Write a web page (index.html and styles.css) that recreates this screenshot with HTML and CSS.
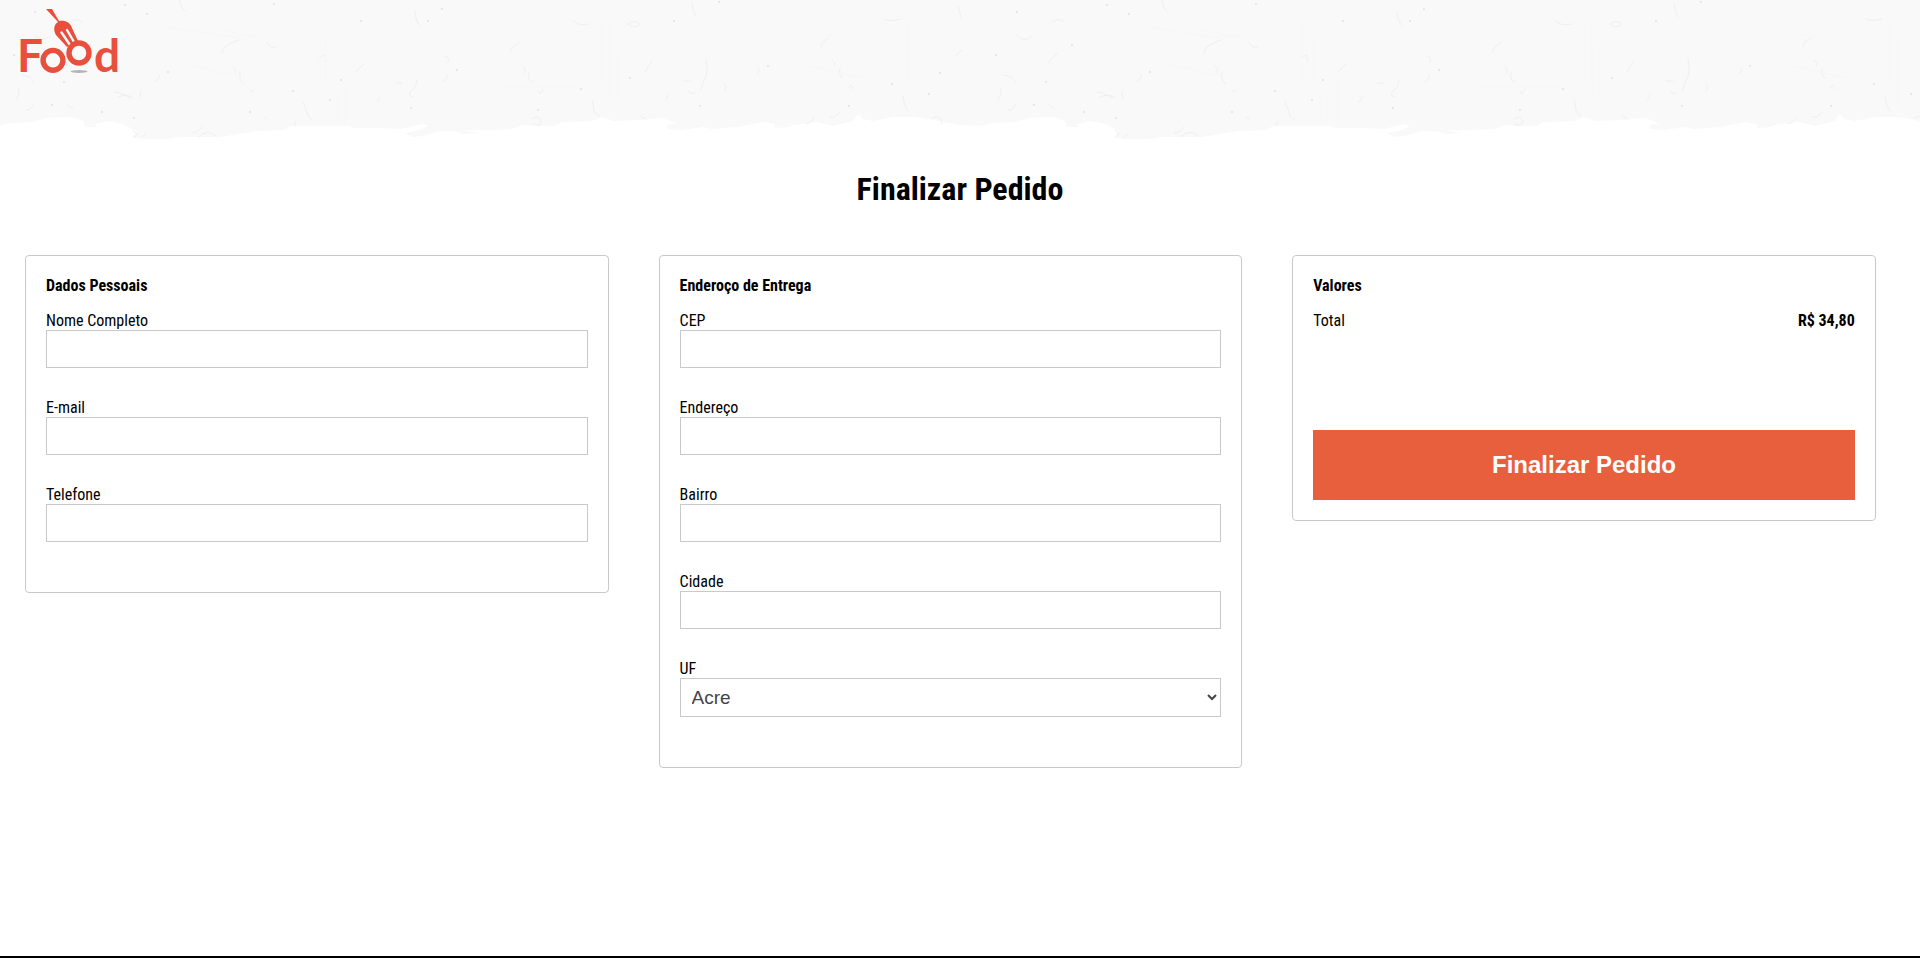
FILE: index.html
```html
<!DOCTYPE html>
<html lang="pt-BR">
<head>
<meta charset="utf-8">
<meta name="viewport" content="width=device-width, initial-scale=1">
<title>Finalizar Pedido</title>
<link rel="stylesheet" href="styles.css">
</head>
<body>
<header class="header">
  <svg class="paper" width="100%" height="140" aria-hidden="true">
    <defs>
      <pattern id="paper" width="982" height="140" patternUnits="userSpaceOnUse">
        <path fill="#f9f9f9" d="M0 0H982V126L960 125L942 122L928 119L913 117H893L873 121L862 119L858 114L853 121L833 126L817 122L792 125L790 127L775 128V124L763 122L738 127L712 129L703 127L682 130L668 129L667 125L678 124L663 118L640 120L613 121L602 117L592 121L562 122L555 126L535 126L523 125L512 129L490 130L465 130L478 133L462 134L455 131L440 131L423 136L412 137L405 133L420 130L428 126L423 124L410 127L402 129L380 128L353 128L348 126H292L283 130L257 131L220 137L180 137L167 139H142L132 137L137 131L133 129L120 123L108 121L95 124L97 127H85L83 121L72 117L47 118L33 122L10 123L0 126Z"/>
        <g fill="none" stroke="#efefef" stroke-linecap="round">
          <path d="M115 92q9 1 15 6M118 97q9-4 15 1M16 100q4-5 3-11M180 0q0 8 5 11M415 11q0 10 6 16M303 102q4 8 5 14q2 3 4 3M296 121q-2 3-1 5M222 53q1-6 7-9l10-4M233 66q4 3 2 7M240 72q-2 8 4 12M267 42q3 7 9 5M320 57l5-2 1 6M356 72l8-8M396 83h6M417 80q-1 8-6 11q-4 5 2 6M377 102q3-3 3-5M264 117l3 2M199 137q8-9 17-1M192 133q6 0 10-6M250 92l4-2M133 130l4 4-3 4M142 137l4-3M155 81q5-2 4-6M142 90q-4 2-1 8M445 56q5 1 3 6M443 82q5-3 4-7M573 20q5 7 16 4M510 52q2-6 9-9M523 66q4 4 1 8M529 73q-2 8 4 9M538 91l2 3 3-5M592 100q2 5 2 11q2 4 5 5M628 24q6-5 12 0q-6 6-12 0M645 72l7-11M692 4q1 8 4 13M706 59q2 12 0 17q-3 6-6 15M724 84q4 4 0 7M684 81h7M688 91q3 4 7 2M665 100q3-2 3-5M757 74q3-2 2-6M821 47q0-6 8-9M832 60q4 3 3 6M840 68q-2 8 3 10M848 88l3-3 2 4M884 19q7 3 16 0M903 96q1 10 5 15M806 124q5-1 8-6M830 117q6 1 10-5M532 119q6-5 9 2q-2 8-8 2M640 116l6 3M958 6q2 8 4 13M26 110q5 1 8-6M70 22q8-5 12 0M35 35q5 8 14 2M66 63l9-10M22 75q10 1 12 8M67 105l6 4M956 56l6-6M932 118q9-5 10 6"/>
          <path stroke="#f7f7f7" d="M320 25v54M325 35v58M331 40v45M338 95v28M345 90v33M355 82v36M602 18v62M610 22v73M618 50v45M908 20v62M915 42v60M925 50v50M170 28l70 10M190 65l50 12M810 66l55 12M760 35h90M500 87h80M220 30l40 8"/>
        </g>
        <g fill="none" stroke="#e2e2e2" stroke-width="2" stroke-linecap="round">
          <path d="M125 5h0M147 14h0M168 72h0M134 118h0M250 112h0M293 91h0M330 100h0M341 80h0M442 9h0M457 70h0M411 108h0M428 21h0M581 89h0M538 110h0M674 21h0M630 78h0M719 2h0M768 66h0M892 84h0M940 73h0M929 94h0M700 106h0M849 106h0M52 105h0M35 12h0M90 45h0M14 55h0M102 112h0M64 82h0M274 4h0M361 21h0"/>
        </g>
      </pattern>
    </defs>
    <rect width="100%" height="140" fill="url(#paper)"/>
  </svg>
  <a class="logo" href="#">
    <svg width="116" height="88" viewBox="12 4 116 88" role="img" aria-label="Food">
      <g class="logo-type" fill="#e94f3d">
        <text x="17" y="72">F</text>
        <text x="94" y="72">d</text>
      </g>
      <ellipse cx="79" cy="71.500" rx="8.500" ry="1.400" fill="#b3b5b5"/>
      <path fill="#e94f3d" d="M46 9H52L59 21C65 20 70 22 72 28L78 41L67 47L56 35C53 30 54 24 58 22Z"/>
      <path fill="none" stroke="#fafafa" stroke-width="2.400" stroke-linecap="round" d="M61.500 32.500L70 45M67 30L74 42"/>
      <g fill="none" stroke="#e94f3d" stroke-width="5.400">
        <circle cx="53" cy="60.300" r="9.900"/>
        <circle cx="79" cy="53" r="10" fill="#fafafa"/>
      </g>
    </svg>
  </a>
</header>

<main class="main">
  <h1 class="title">Finalizar Pedido</h1>
  <form class="columns">
    <div class="column">
      <section class="card">
        <h2 class="card-title">Dados Pessoais</h2>
        <div class="field"><label for="nome">Nome Completo</label><input class="control" id="nome" type="text"></div>
        <div class="field"><label for="email">E-mail</label><input class="control" id="email" type="email"></div>
        <div class="field"><label for="telefone">Telefone</label><input class="control" id="telefone" type="tel"></div>
      </section>
    </div>
    <div class="column">
      <section class="card">
        <h2 class="card-title">Enderoço de Entrega</h2>
        <div class="field"><label for="cep">CEP</label><input class="control" id="cep" type="text"></div>
        <div class="field"><label for="endereco">Endereço</label><input class="control" id="endereco" type="text"></div>
        <div class="field"><label for="bairro">Bairro</label><input class="control" id="bairro" type="text"></div>
        <div class="field"><label for="cidade">Cidade</label><input class="control" id="cidade" type="text"></div>
        <div class="field"><label for="uf">UF</label><select class="control control-select" id="uf"><option>Acre</option></select></div>
      </section>
    </div>
    <div class="column">
      <section class="card">
        <h2 class="card-title">Valores</h2>
        <div class="total"><span>Total</span><strong>R$ 34,80</strong></div>
        <button class="submit" type="submit">Finalizar Pedido</button>
      </section>
    </div>
  </form>
</main>
<footer class="footer"></footer>
</body>
</html>
```
FILE: styles.css
```css
* {
  box-sizing: border-box;
}

body {
  margin: 0;
  min-height: 100vh;
  display: flex;
  flex-direction: column;
  background: #fff;
  color: #000;
  font-family: "Roboto Condensed", Roboto, sans-serif;
  font-size: 16px;
  line-height: 19px;
}

.header {
  position: relative;
  height: 140px;
}

.paper {
  position: absolute;
  inset: 0;
}

.logo {
  position: relative;
  display: inline-block;
  padding: 4px 12px;
}

.logo svg {
  display: block;
}

.logo-type {
  font-family: Lato, sans-serif;
  font-size: 46px;
  font-weight: 700;
}

.main {
  flex: 1;
}

.title {
  margin: 31px 0 22px;
  text-align: center;
  font-size: 32px;
  line-height: 37px;
}

.columns {
  display: flex;
  flex-wrap: wrap;
  align-items: flex-start;
}

.column {
  width: 33%;
  min-width: 320px;
  padding: 25px;
}

.card {
  padding: 20px;
  border: 1px solid #c9c9c9;
  border-radius: 4px;
}

.card-title {
  margin: 0 0 16px;
  font-size: 16px;
  line-height: 19px;
}

.field {
  margin-bottom: 30px;
}

.field label {
  display: block;
}

.control {
  display: block;
  width: 100%;
  height: 38px;
  padding: 0 8px;
  border: 1px solid #c9c9c9;
  border-radius: 0;
  background: #fff;
  color: #444;
  font-family: "Liberation Sans", Arial, sans-serif;
  font-size: 19px;
}

.control-select {
  height: 39px;
  padding: 0 1px 0 7px;
}

.total {
  display: flex;
  justify-content: space-between;
  margin-bottom: 100px;
}

.submit {
  display: block;
  width: 100%;
  height: 70px;
  border: 0;
  background: #e85f3e;
  color: #fff;
  font-family: "Liberation Sans", Arial, sans-serif;
  font-size: 24px;
  font-weight: 700;
}

.footer {
  height: 2px;
  background: #000;
}
```
